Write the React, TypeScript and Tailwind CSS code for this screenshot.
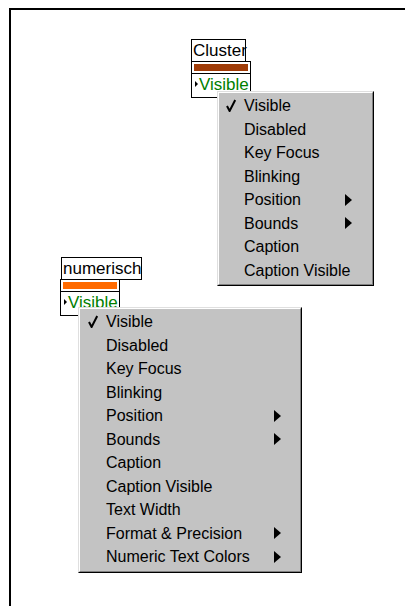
import React from "react";

const font = { fontFamily: '"Liberation Sans", Arial, sans-serif' };

function Check() {
  return (
    <svg width="10" height="13" viewBox="0 0 10 13" className="block">
      <path d="M1 7 L3.6 12 L9.2 1" fill="none" stroke="#000" strokeWidth="2" />
    </svg>
  );
}

function Arrow() {
  return (
    <svg width="7" height="12" viewBox="0 0 7 12" className="block">
      <polygon points="0,0 7,6 0,12" fill="#000" />
    </svg>
  );
}

type Item = { label: string; checked?: boolean; sub?: boolean };

function Menu({
  items,
  className,
  padL,
  padR,
}: {
  items: Item[];
  className: string;
  padL: string;
  padR: string;
}) {
  return (
    <div
      className={`absolute border border-t-[#dfdfdf] border-l-[#dfdfdf] border-r-black border-b-black ${className}`}
    >
      <div className="flex h-full flex-col border border-t-white border-l-white border-r-[#808080] border-b-[#808080] bg-[#c3c3c3] py-px">
        {items.map((it) => (
          <div
            key={it.label}
            className={`flex h-[23.5px] items-center text-[16px] text-black ${padL} ${padR}`}
          >
            <span className="flex w-[18px] shrink-0 items-center">{it.checked && <Check />}</span>
            <span className="flex-1 whitespace-nowrap leading-[23.5px]">{it.label}</span>
            <span className="flex w-[7px] shrink-0 items-center">{it.sub && <Arrow />}</span>
          </div>
        ))}
      </div>
    </div>
  );
}

function Control({
  label,
  className,
  labelClass,
  boxClass,
  barColor,
}: {
  label: string;
  className: string;
  labelClass: string;
  boxClass: string;
  barColor: string;
}) {
  return (
    <div className={`absolute flex flex-col ${className}`}>
      <div
        className={`border border-black bg-white px-px text-[17px] leading-[21px] text-black whitespace-nowrap ${labelClass}`}
      >
        {label}
      </div>
      <div className={`flex flex-col border border-black bg-white overflow-hidden -mt-px ${boxClass}`}>
        <div className="p-[2px]">
          <div className={`h-[7px] ${barColor}`} />
        </div>
        <div className="h-px bg-black" />
        <div className="flex flex-1 items-start gap-[1px] overflow-hidden pl-[3px]">
          <svg width="3" height="6" viewBox="0 0 3 6" className="mt-[7px] block shrink-0">
            <polygon points="0,0 3,3 0,6" fill="#000" />
          </svg>
          <span className="text-[17px] leading-[21px] text-[#008000]">Visible</span>
        </div>
      </div>
    </div>
  );
}

export default function App() {
  const base: Item[] = [
    { label: "Visible", checked: true },
    { label: "Disabled" },
    { label: "Key Focus" },
    { label: "Blinking" },
    { label: "Position", sub: true },
    { label: "Bounds", sub: true },
    { label: "Caption" },
    { label: "Caption Visible" },
  ];
  const numeric: Item[] = [
    ...base,
    { label: "Text Width" },
    { label: "Format & Precision", sub: true },
    { label: "Numeric Text Colors", sub: true },
  ];
  return (
    <div className="relative w-[405px] h-[606px] overflow-hidden bg-white" style={font}>
      <div className="absolute left-[9px] top-[8px] w-[500px] h-[700px] border-l-2 border-t-2 border-black" />

      <Control
        label="Cluster"
        className="left-[191px] top-[39px]"
        labelClass="w-[55px] h-[23px]"
        boxClass="w-[60px] h-[37px]"
        barColor="bg-[#a03c08]"
      />
      <Menu
        items={base}
        className="left-[217px] top-[91px] w-[157px] h-[195px]"
        padL="pl-[7px]"
        padR="pr-[20px]"
      />

      <Control
        label="numerisch"
        className="left-[60px] top-[257px]"
        labelClass="ml-px w-[81px] h-[23px]"
        boxClass="w-[60px] h-[37px]"
        barColor="bg-[#ff6a00]"
      />
      <Menu
        items={numeric}
        className="left-[78px] top-[307px] w-[224px] h-[266px]"
        padL="pl-[8px]"
        padR="pr-[19px]"
      />
    </div>
  );
}
